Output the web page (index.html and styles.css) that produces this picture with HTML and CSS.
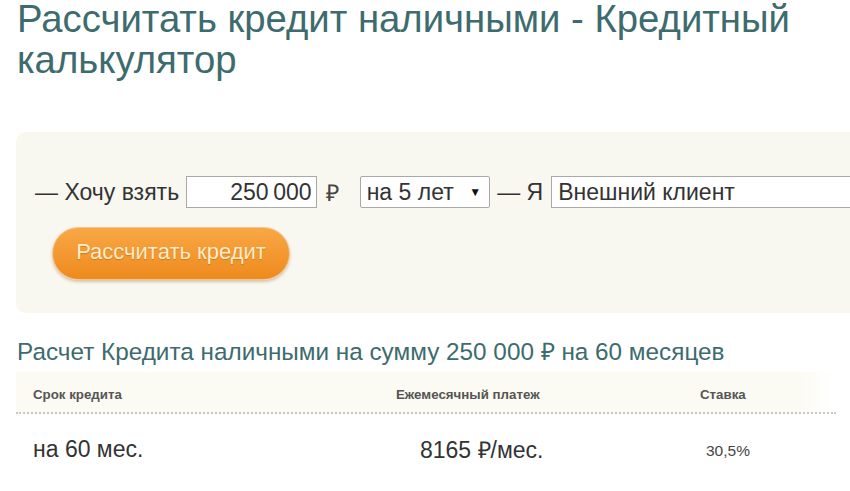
FILE: index.html
```html
<!DOCTYPE html>
<html lang="ru">
<head>
<meta charset="utf-8">
<link rel="stylesheet" href="styles.css">
</head>
<body>
<div class="page">
  <h1 class="title">Рассчитать кредит наличными - Кредитный калькулятор</h1>
  <div class="panel">
    <div class="row">
      <span class="lbl">— Хочу взять</span>
      <div class="field amount">250&#8239;000</div>
      <span class="rub">₽</span>
      <div class="field select"><span>на 5 лет</span><span class="arrow">▼</span></div>
      <span class="lbl">— Я</span>
      <div class="field client">Внешний клиент</div>
    </div>
    <button class="btn">Рассчитать кредит</button>
  </div>
  <h2 class="result">Расчет Кредита наличными на сумму 250 000 ₽ на 60 месяцев</h2>
  <div class="table">
    <div class="thead">
      <div class="c1">Срок кредита</div>
      <div class="c2">Ежемесячный платеж</div>
      <div class="c3">Ставка</div>
    </div>
    <div class="trow">
      <div class="c1 big">на 60 мес.</div>
      <div class="c2 big pay">8165 ₽/мес.</div>
      <div class="c3 rate">30,5%</div>
    </div>
  </div>
</div>
</body>
</html>
```
FILE: styles.css
```css
html, body {
  margin: 0;
  padding: 0;
  background: #ffffff;
  overflow: hidden;
}
body {
  font-family: "Liberation Sans", Arial, sans-serif;
  color: #333;
  width: 850px;
  height: 491px;
}
.page {
  padding-left: 16px;
}
.title {
  margin: -2px 0 0 0;
  padding-left: 1px;
  font-size: 38.3px;
  line-height: 41px;
  font-weight: normal;
  color: #3d6b6e;
  width: 830px;
}
.panel {
  margin-top: 52px;
  background: #f8f7f0;
  border-radius: 10px 0 0 10px;
  height: 181px;
  box-sizing: border-box;
  padding: 44px 0 0 19px;
  margin-right: -20px;
}
.row {
  display: flex;
  align-items: center;
  height: 32px;
  white-space: nowrap;
}
.lbl {
  font-size: 23px;
  color: #333;
}
.field {
  box-sizing: border-box;
  height: 32px;
  border: 1px solid #a9a9a9;
  background: #fff;
  font-size: 23px;
  color: #333;
  display: flex;
  align-items: center;
  padding: 0 5px;
}
.amount {
  margin-left: 7px;
  width: 131px;
  justify-content: flex-end;
  padding-right: 4px;
}
.rub {
  font-size: 23px;
  color: #444;
  margin-left: 9px;
}
.select {
  margin-left: 21px;
  width: 131px;
  justify-content: space-between;
  border-radius: 2px;
  padding-left: 6px;
  padding-right: 8px;
}
.arrow {
  font-size: 12px;
  color: #111;
}
.select + .lbl {
  margin-left: 7px;
}
.client {
  margin-left: 8px;
  width: 320px;
  padding-left: 6px;
}
.btn {
  display: block;
  margin: 19px 0 0 17px;
  width: 238px;
  height: 53px;
  border-radius: 27px;
  border: 1px solid #f1c590;
  background: linear-gradient(#f9a846, #ee8a1e);
  box-shadow: 0 2px 3px rgba(150, 100, 40, 0.35);
  color: #fcebc9;
  font-family: "Liberation Sans", Arial, sans-serif;
  font-size: 22px;
  padding: 0 0 4px 0;
  text-shadow: 0 1px 1px rgba(160, 80, 0, 0.4);
}
.result {
  margin: 24px 0 0 1px;
  font-size: 24.3px;
  line-height: 30px;
  font-weight: normal;
  color: #3d6b6e;
}
.table {
  margin-top: 5px;
  width: 820px;
}
.thead {
  display: flex;
  align-items: center;
  height: 42px;
  background: linear-gradient(to right, #fbfaf3, #fbfaf3 95%, #ffffff);
  border-bottom: 2px dotted #c8c8c8;
  font-size: 13.3px;
  font-weight: bold;
  color: #555;
  padding-top: 4px;
  box-sizing: border-box;
}
.c1 {
  width: 363px;
  padding-left: 17px;
}
.c2 {
  width: 304px;
}
.c3 {
  flex: 1;
}
.trow {
  display: flex;
  align-items: center;
  height: 70px;
}
.big {
  font-size: 23px;
  color: #333;
}
.pay {
  padding-left: 24px;
  box-sizing: border-box;
  width: 310px;
}
.rate {
  font-size: 15.5px;
  color: #444;
  padding-left: 0;
  padding-top: 4px;
}
```
